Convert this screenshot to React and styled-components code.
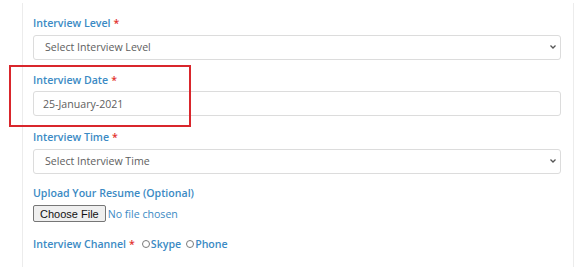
import React from "react";
import styled, { createGlobalStyle } from "styled-components";

const Global = createGlobalStyle`
  html, body { margin: 0; padding: 0; background: #fff; }
  body { font-family: "Open Sans", "Noto Sans", sans-serif; }
`;

const Panel = styled.div`
  box-sizing: border-box;
  margin: 3px 0 0 22px;
  width: 552px;
  height: 264px;
  padding: 11px 12px 0 10px;
  border-left: 1px solid #ececec;
  border-right: 1px solid #ececec;
`;

const Field = styled.div`
  position: relative;
  display: flex;
  flex-direction: column;
  gap: ${(p) => p.$gap ?? 4}px;
  margin-bottom: ${(p) => p.$mb ?? 12}px;
`;

const Label = styled.label`
  box-sizing: border-box;
  display: flex;
  align-items: center;
  height: 16px;
  padding-top: 2px;
  font-size: 10.6px;
  font-weight: 600;
  color: #3b8ac4;
  white-space: nowrap;
`;

const Star = styled.span`
  color: #e2322e;
  margin-left: 3px;
`;

const SelectWrap = styled.div`
  position: relative;
  height: 25px;
`;

const Select = styled.select`
  appearance: none;
  box-sizing: border-box;
  width: 100%;
  height: 25px;
  border: 1px solid #dcdcdc;
  border-radius: 3px;
  background: #fff;
  padding: 0 24px 0 11px;
  font-family: "Open Sans", "Noto Sans", sans-serif;
  font-size: 10.6px;
  color: #5e5e5e;
  outline: none;
`;

const Chevron = styled.svg`
  position: absolute;
  right: 4px;
  top: 10px;
  pointer-events: none;
`;

const Input = styled.input`
  box-sizing: border-box;
  width: 100%;
  height: 25px;
  border: 1px solid #dcdcdc;
  border-radius: 3px;
  padding: 0 9px;
  font-family: "Open Sans", "Noto Sans", sans-serif;
  font-size: 10.6px;
  color: #5e5e5e;
  outline: none;
`;

const Highlight = styled.div`
  position: absolute;
  left: -24px;
  top: -6px;
  width: 182px;
  height: 62px;
  box-sizing: border-box;
  border: 2px solid #d9262c;
  pointer-events: none;
`;

const FileRow = styled.div`
  display: flex;
  align-items: center;
  gap: 2px;
  height: 17px;
`;

const FileButton = styled.label`
  box-sizing: border-box;
  display: inline-flex;
  align-items: center;
  height: 17px;
  padding: 0 6px;
  background: #efefef;
  border: 1px solid #767676;
  border-radius: 2px;
  font-family: "Liberation Sans", Arial, sans-serif;
  font-size: 11px;
  color: #111;
  cursor: pointer;
`;

const HiddenFile = styled.input`
  display: none;
`;

const FileText = styled.span`
  font-size: 10.6px;
  color: #3b8ac4;
`;

const RadioRow = styled.div`
  display: flex;
  align-items: center;
  height: 16px;
  padding-top: 1px;
`;

const RadioOption = styled.label`
  display: inline-flex;
  align-items: center;
  margin-left: ${(p) => p.$ml ?? 5}px;
  padding-top: 2px;
  font-size: 10.6px;
  font-weight: 600;
  color: #3b8ac4;
  cursor: pointer;
`;

const Radio = styled.input`
  appearance: none;
  box-sizing: border-box;
  width: 8px;
  height: 8px;
  margin: 0 1px 0 0;
  border: 1px solid #7a7a7a;
  border-radius: 50%;
  background: #fff;
`;

function ChevronIcon() {
  return (
    <Chevron width="8" height="6" viewBox="0 0 8 6">
      <path d="M1.5 1.5 L4 4 L6.5 1.5" fill="none" stroke="#555" strokeWidth="1.3" />
    </Chevron>
  );
}

export default function App() {
  return (
    <>
      <Global />
      <Panel>
        <Field>
          <Label>
            Interview Level<Star>*</Star>
          </Label>
          <SelectWrap>
            <Select defaultValue="">
              <option value="">Select Interview Level</option>
            </Select>
            <ChevronIcon />
          </SelectWrap>
        </Field>

        <Field>
          <Label>
            Interview Date<Star>*</Star>
          </Label>
          <Input defaultValue="25-January-2021" />
          <Highlight />
        </Field>

        <Field $mb={11}>
          <Label>
            Interview Time<Star>*</Star>
          </Label>
          <SelectWrap>
            <Select defaultValue="">
              <option value="">Select Interview Time</option>
            </Select>
            <ChevronIcon />
          </SelectWrap>
        </Field>

        <Field $gap={5} $mb={12}>
          <Label>Upload Your Resume (Optional)</Label>
          <FileRow>
            <FileButton>
              Choose File
              <HiddenFile type="file" />
            </FileButton>
            <FileText>No file chosen</FileText>
          </FileRow>
        </Field>

        <RadioRow>
          <Label>
            Interview Channel<Star>*</Star>
          </Label>
          <RadioOption $ml={7}>
            <Radio type="radio" name="channel" />
            Skype
          </RadioOption>
          <RadioOption>
            <Radio type="radio" name="channel" />
            Phone
          </RadioOption>
        </RadioRow>
      </Panel>
    </>
  );
}
